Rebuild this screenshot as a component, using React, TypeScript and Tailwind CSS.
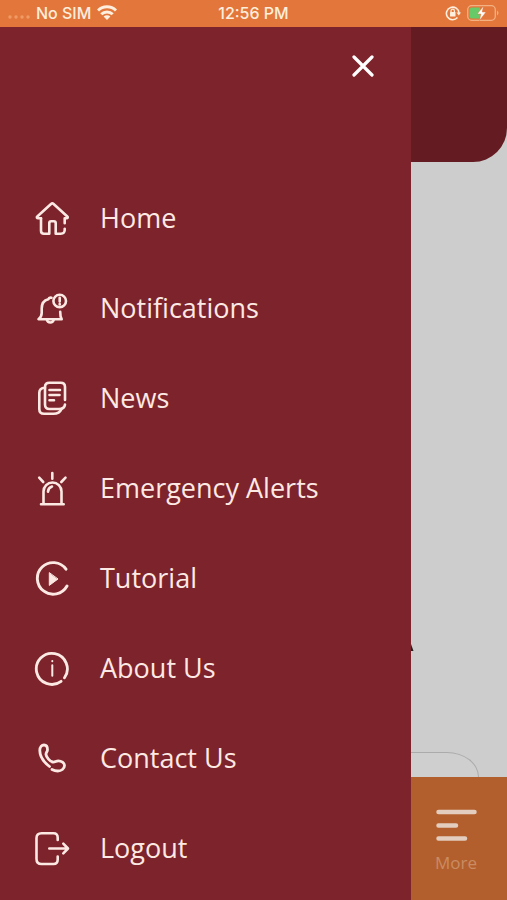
import type { ReactNode } from "react";

const menuItems: { label: string; icon: ReactNode }[] = [
  {
    label: "Home",
    icon: (
      <>
        <path d="M7 17.3H4.2c-1.4 0-1.8-1-.9-1.8L17 3q1.3-1.1 2.6 0l13.700 12.500c.9.8.5 1.800-.9 1.800h-1.700v5" />
        <path d="M7 17.3v12.400q0 3 3 3h5.300V22q0-1.800 1.800-1.800h2.800q1.800 0 1.800 1.800v10.700h5q4.500 0 4-5" />
      </>
    ),
  },
  {
    label: "Notifications",
    icon: (
      <>
        <path d="M17.500 6.700q-2.500-.6-3.200 1.600C10 9.300 7.700 13 7.700 17.500v4.500c0 3-1 4.500-3.200 6.300h23.200c-1-1.600-1.500-3.500-1.500-7.500" />
        <path d="M12.800 28.500q.7 3 3.500 3t3.500-3" />
        <circle cx="25.700" cy="10" r="6.300" />
        <path d="M25.700 6.800v3.700M25.700 13v.4" />
      </>
    ),
  },
  {
    label: "News",
    icon: (
      <>
        <path d="M31 19V6q0-4.300-4.300-4.300h-11.200Q11 1.700 11 6v17.500q0 4.500 4.500 4.500h9.500q5.500 0 6-4.500" />
        <path d="M11 6.700q-5.700.3-5.700 5V28q0 4.800 4.800 4.800h9.400q6 0 8-4.800" />
        <path d="M15.500 9H26M15.500 14H25.500M15.500 19.300h4.500" />
      </>
    ),
  },
  {
    label: "Emergency Alerts",
    icon: (
      <>
        <path d="M7 33.300h22.700M9.500 33V20.500a9 9 0 0 1 18 0V33M14 20.700q.3-4 4-5.200" />
        <path d="M18.300 2v5.700M5.200 6.700l4 4.300M31.500 6.700l-4.200 4.300" />
      </>
    ),
  },
  {
    label: "Tutorial",
    icon: (
      <>
        <path d="M32 8.200a15.800 15.800 0 1 0 1 16.800" strokeWidth="2.900" />
        <path d="M15.300 12v12.400l8.400-6.200z" fill="currentColor" strokeWidth="1" />
      </>
    ),
  },
  {
    label: "About Us",
    icon: (
      <>
        <path d="M30.500 26.800a15.500 15.500 0 1 0-3.400 3.500" strokeWidth="2.800" />
        <path d="M18.300 14.300v10.500M18.300 10v.2" strokeWidth="2" />
      </>
    ),
  },
  {
    label: "Contact Us",
    icon: (
      <path
        d="M15.500 25.500C9 20.500 5.800 15 5.800 9.500c0-3.500 2-5.500 4.200-5.500 2.500 0 3.500 2.500 3.500 4.700 0 2-1.700 2.800-1.500 4.800.3 2.700 4 7 6.700 7.500 2.300.4 3.300-1.200 5.600-1.200 3 0 6.200 2.200 6.200 4.700 0 3.300-3.200 5.500-6.700 5.500-2.200 0-4.100-.6-5.800-1.500"
        strokeWidth="2.800"
      />
    ),
  },
  {
    label: "Logout",
    icon: (
      <>
        <path d="M23.700 9V6.500q0-4.200-4.200-4.200h-12Q2.500 2.300 2.500 7v21q0 5 5 5h12q4.200 0 4.200-4.500V25.500" />
        <path d="M15.300 17.500h18.500M29.300 12.700l4.700 4.800-4.700 4.800" />
      </>
    ),
  },
];

function StatusBar() {
  return (
    <header className="grid h-[27px] grid-cols-[1fr_auto_1fr] items-center bg-[#e3773b] px-2 pb-0.5 font-['Inter',sans-serif] text-base font-medium text-[#fdeedd]">
      <div className="flex items-center">
        <svg width="24" height="6" viewBox="0 0 24 6" className="mt-2 mr-1" fill="#f09a66">
          <circle cx="2" cy="3" r="1.700" />
          <circle cx="8" cy="3" r="1.700" />
          <circle cx="14" cy="3" r="1.700" />
          <circle cx="20" cy="3" r="1.700" />
        </svg>
        <span>No SIM</span>
        <svg width="20" height="15" viewBox="0 0 20 15" className="ml-1.5" fill="none" stroke="currentColor" strokeWidth="3">
          <path d="M1 5.500a12.800 12.800 0 0 1 18 0" />
          <path d="M4.300 9.300a8 8 0 0 1 11.400 0" />
          <path d="M10 15l-3.400-3.400a4.800 4.800 0 0 1 6.800 0z" fill="currentColor" stroke="none" />
        </svg>
      </div>
      <span>12:56 PM</span>
      <div className="flex items-center justify-end gap-1.5">
        <svg width="16" height="16" viewBox="0 0 16 16" fill="none" stroke="currentColor" strokeWidth="1.600">
          <path d="M12.500 12.500A6.300 6.300 0 1 1 14 8" />
          <path d="M11.500 7.500h4.500l-2.200 3z" fill="currentColor" stroke="none" />
          <rect x="5" y="7" width="5.500" height="4.500" rx=".5" fill="currentColor" stroke="none" />
          <path d="M6 7.500V6q0-1.800 1.700-1.800T9.400 6v1.500" strokeWidth="1.200" />
        </svg>
        <svg width="32" height="16" viewBox="0 0 32 16">
          <rect x=".7" y=".7" width="27.600" height="14.600" rx="4" fill="none" stroke="#f3b183" strokeWidth="1.300" />
          <path d="M5 2.500h8v11H5q-2.500 0-2.500-2.500V5q0-2.500 2.500-2.500z" fill="#67c967" />
          <path d="M16.500 1l-6.300 8h3.600l-1.300 6.500L19 7h-3.800z" fill="#fff" stroke="#e3773b" strokeWidth=".5" />
          <path d="M30 5.500q3 2.500 0 5z" fill="#f3b183" />
        </svg>
      </div>
    </header>
  );
}

export default function App() {
  return (
    <div className="flex min-h-screen flex-col bg-[#cdcdcd] font-['Open_Sans',sans-serif]">
      <StatusBar />
      <div className="flex flex-1">
        <aside className="flex-1 bg-[#7d232b] text-[#fce9e3]">
          <div className="flex h-[147px] items-start justify-end pt-6 pr-8">
            <button type="button" aria-label="Close menu" className="flex size-8 items-center justify-center text-white">
              <svg width="24" height="24" viewBox="0 0 24 24" fill="none" stroke="currentColor" strokeWidth="3.200" strokeLinecap="round">
                <path d="M3 2l18 18M21 2l-18 18" />
              </svg>
            </button>
          </div>
          <nav>
            <ul>
              {menuItems.map((item) => (
                <li key={item.label}>
                  <a href="#" className="flex h-[90px] items-center gap-[30px] pl-[34px] text-[27px] whitespace-nowrap">
                    <svg
                      width="36"
                      height="36"
                      viewBox="0 0 36 36"
                      fill="none"
                      stroke="currentColor"
                      strokeWidth="2.600"
                      strokeLinecap="round"
                      strokeLinejoin="round"
                      aria-hidden="true"
                    >
                      {item.icon}
                    </svg>
                    <span className="pb-0.5">{item.label}</span>
                  </a>
                </li>
              ))}
            </ul>
          </nav>
        </aside>
        <main className="flex w-24 flex-col overflow-hidden">
          <div className="h-[135px] rounded-br-[34px] bg-[#641b21]" />
          <div className="flex flex-1 flex-col justify-end">
            <svg width="3" height="8" viewBox="0 0 3 8" className="mb-[100px]" fill="#222">
              <path d="M0 0l2.500 7H0z" />
            </svg>
            <div className="mr-7 h-[25px] rounded-tr-[36px_28px] border-t border-r border-[#ababab] bg-[#cfcfcf]" />
          </div>
          <button type="button" className="flex h-[123px] flex-col items-start gap-2.5 bg-[#b35f2d] pt-8 pl-6 text-left text-[#ca8c62]">
            <svg width="42" height="32" viewBox="0 0 42 32" fill="none" stroke="#e2cdbf" strokeWidth="4.500" strokeLinecap="round">
              <path d="M3.500 3H39.500M3.500 16.500H21M3.500 29.500H30" />
            </svg>
            <span className="text-[17px] leading-6">More</span>
          </button>
        </main>
      </div>
    </div>
  );
}
